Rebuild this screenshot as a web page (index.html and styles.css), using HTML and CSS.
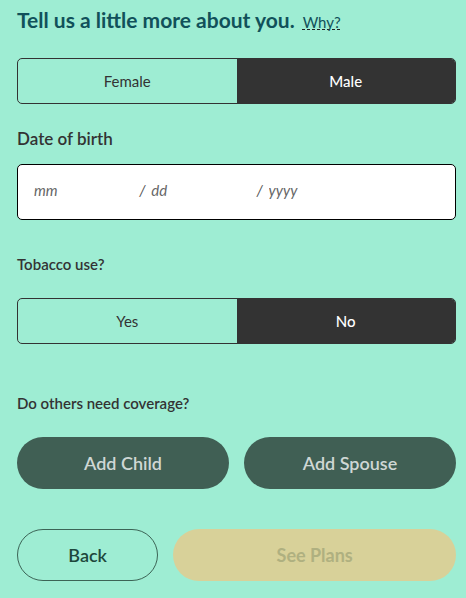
FILE: index.html
```
<!DOCTYPE html>
<html lang="en">
<head>
    <meta charset="UTF-8">
    <meta name="viewport" content="width=device-width, initial-scale=1.0">
    <title>Tell us about you</title>
    <link rel="stylesheet" href="styles.css">
</head>
<body>

<form class="about-form">
    <!-- Heading -->
    <div class="heading">
        <h1>Tell us a little more about you.</h1>
        <a href="#" class="why-link">Why?</a>
    </div>

    <!-- Gender -->
    <div class="toggle" role="radiogroup" aria-label="Gender">
        <label class="option"><input type="radio" name="gender" value="female"><span>Female</span></label>
        <label class="option"><input type="radio" name="gender" value="male" checked><span>Male</span></label>
    </div>

    <!-- Date of birth -->
    <label class="field-title" for="month">Date of birth</label>
    <div class="date-box">
        <input type="text" id="month" placeholder="mm" maxlength="2">
        <span class="slash">/</span>
        <input type="text" id="day" placeholder="dd" maxlength="2" aria-label="Day of birth">
        <span class="slash">/</span>
        <input type="text" id="year" placeholder="yyyy" maxlength="4" aria-label="Year of birth">
    </div>

    <!-- Tobacco -->
    <p class="question" id="tobaccoTitle">Tobacco use?</p>
    <div class="toggle" role="radiogroup" aria-labelledby="tobaccoTitle">
        <label class="option"><input type="radio" name="tobacco" value="yes"><span>Yes</span></label>
        <label class="option"><input type="radio" name="tobacco" value="no" checked><span>No</span></label>
    </div>

    <!-- Other people -->
    <p class="question others">Do others need coverage?</p>
    <div class="btn-row">
        <button type="button" class="btn btn-add">Add Child</button>
        <button type="button" class="btn btn-add">Add Spouse</button>
    </div>

    <!-- Navigation -->
    <div class="btn-row nav-row">
        <button type="button" class="btn btn-back">Back</button>
        <button type="submit" class="btn btn-next" disabled>See Plans</button>
    </div>
</form>

</body>
</html>
```
FILE: styles.css
```
* {
    box-sizing: border-box;
}

body {
    font-family: Lato, "Open Sans", sans-serif;
    background-color: #9eedd3;
    color: #333;
    margin: 0;
}

button,
input {
    font-family: inherit;
}

.about-form {
    padding: 8px 10px 17px 17px;
}

.heading {
    display: flex;
    align-items: baseline;
    gap: 8px;
    margin-bottom: 26px;
}

h1 {
    margin: 0;
    font-size: 21px;
    line-height: 24px;
    font-weight: bold;
    color: #11515a;
}

.why-link {
    font-size: 15px;
    line-height: 20px;
    color: #11515a;
    text-decoration: underline dashed 1px #222;
    text-decoration-skip-ink: none;
    text-underline-offset: 1px;
}

.toggle {
    display: flex;
    height: 46px;
    border: 1px solid #333;
    border-radius: 5px;
    overflow: hidden;
}

.option {
    flex: 1;
    position: relative;
    cursor: pointer;
}

.option input {
    position: absolute;
    opacity: 0;
}

.option span {
    display: flex;
    height: 100%;
    align-items: center;
    justify-content: center;
    font-size: 15px;
}

.option input:checked + span {
    background-color: #333;
    color: white;
    font-weight: 500;
}

.field-title {
    display: block;
    margin: 25px 0 15px;
    font-size: 17px;
    line-height: 20px;
    font-weight: 600;
}

.date-box {
    display: flex;
    align-items: center;
    height: 56px;
    padding: 0 16px 4px;
    background-color: white;
    border: 1px solid #000;
    border-radius: 5px;
    font-size: 15px;
    font-style: italic;
    color: #555;
}

.date-box input {
    width: 26%;
    padding: 0;
    border: none;
    outline: none;
    background: none;
    font-size: 15px;
    font-style: italic;
    color: #333;
}

.date-box input::placeholder {
    color: #666;
}

.slash {
    width: 12px;
}

.question {
    margin: 34px 0 24px;
    font-size: 15px;
    line-height: 20px;
    font-weight: 600;
}

.others {
    margin-top: 49px;
}

.btn-row {
    display: grid;
    grid-template-columns: 1fr 1fr;
    gap: 15px;
}

.nav-row {
    grid-template-columns: 1fr 2fr;
    margin-top: 40px;
}

.btn {
    height: 52px;
    padding: 0;
    border: none;
    border-radius: 26px;
    font-size: 18px;
    font-weight: 600;
    cursor: pointer;
}

.btn-add {
    background-color: #405f54;
    color: #cfd7d4;
}

.btn-back {
    background: none;
    border: 1px solid #3c6456;
    color: #1d473c;
}

.btn-next {
    background-color: #d8d199;
    color: #afb080;
    font-weight: bold;
    cursor: default;
}
```
